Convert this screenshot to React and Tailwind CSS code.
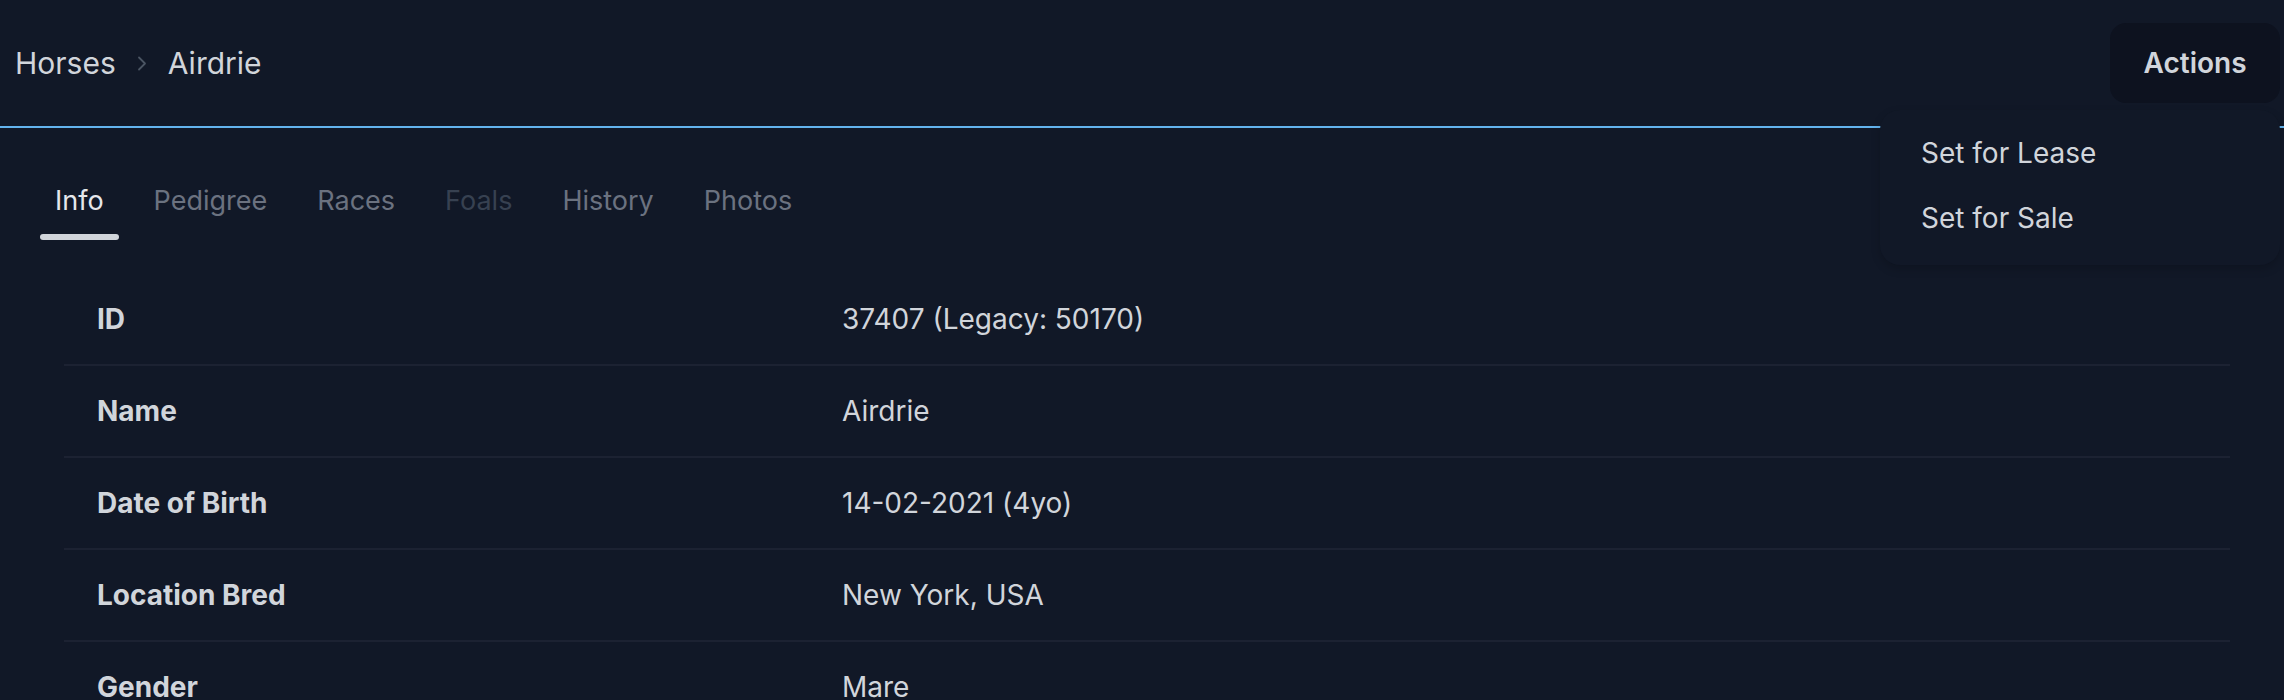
import React, { useState } from 'react';

const tabs = [
  { name: 'Info' },
  { name: 'Pedigree' },
  { name: 'Races' },
  { name: 'Foals', disabled: true },
  { name: 'History' },
  { name: 'Photos' },
];

const details = [
  { label: 'ID', value: '37407 (Legacy: 50170)' },
  { label: 'Name', value: 'Airdrie' },
  { label: 'Date of Birth', value: '14-02-2021 (4yo)' },
  { label: 'Location Bred', value: 'New York, USA' },
  { label: 'Gender', value: 'Mare' },
];

const App = () => {
  const [activeTab, setActiveTab] = useState('Info');
  const [menuOpen, setMenuOpen] = useState(true);

  return (
    <div className="min-h-screen bg-[#111827] text-[#d1d5db] font-['Inter','Noto_Sans',sans-serif]">
      {/* Header with breadcrumb and actions */}
      <div className="flex items-center justify-between h-[128px] border-b-2 border-[#63b3ed]">
        <nav className="flex items-center pl-[15px] text-[30px] leading-none">
          <span>Horses</span>
          <svg className="mx-[21px] w-[10px] h-[15px] text-[#4b5563]" viewBox="0 0 10 15" fill="none">
            <polyline points="2,1.5 8,7.5 2,13.5" stroke="currentColor" strokeWidth="1.8" strokeLinecap="round" strokeLinejoin="round" />
          </svg>
          <span>Airdrie</span>
        </nav>

        <div className="relative mr-[4px]">
          <button
            onClick={() => setMenuOpen(prev => !prev)}
            className="w-[170px] h-[80px] rounded-[16px] bg-[#0d121f] text-[28px] font-semibold text-[#d1d5db]"
          >
            Actions
          </button>
          {menuOpen && (
            <div className="absolute right-0 top-[87px] z-10 w-[400px] pt-[10px] pb-[15px] rounded-[20px] bg-[#111827] shadow-[0_4px_10px_rgba(0,0,0,0.18)]">
              <div className="h-[65px] flex items-center px-[41px] text-[28px]">Set for Lease</div>
              <div className="h-[65px] flex items-center px-[41px] text-[28px]">Set for Sale</div>
            </div>
          )}
        </div>
      </div>

      {/* Tabs */}
      <div className="flex pl-[30px]">
        {tabs.map((tab) => {
          const isActive = tab.name === activeTab;
          return (
            <button
              key={tab.name}
              disabled={tab.disabled}
              onClick={() => setActiveTab(tab.name)}
              className="flex flex-col px-[25px] pt-[52px]"
            >
              <span
                className={
                  isActive
                    ? 'text-[27px] leading-[42px] text-[#e5e7eb]'
                    : tab.disabled
                    ? 'text-[27px] leading-[42px] text-[#374151]'
                    : 'text-[27px] leading-[42px] text-[#6b7280]'
                }
              >
                {tab.name}
              </span>
              <span
                className={
                  isActive
                    ? 'mt-[12px] mx-[-15px] h-[6px] rounded-full bg-[#d1d5db]'
                    : 'mt-[12px] h-[6px]'
                }
              />
            </button>
          );
        })}
      </div>

      {/* Info table */}
      <div className="mt-[34px] ml-[64px] mr-[54px]">
        {details.map((row) => (
          <div key={row.label} className="flex items-center h-[92px] border-b-2 border-[#1c2232] text-[28px]">
            <div className="w-[746px] pl-[33px] font-bold">{row.label}</div>
            <div className="pl-[32px]">{row.value}</div>
          </div>
        ))}
      </div>
    </div>
  );
};

export default App;
